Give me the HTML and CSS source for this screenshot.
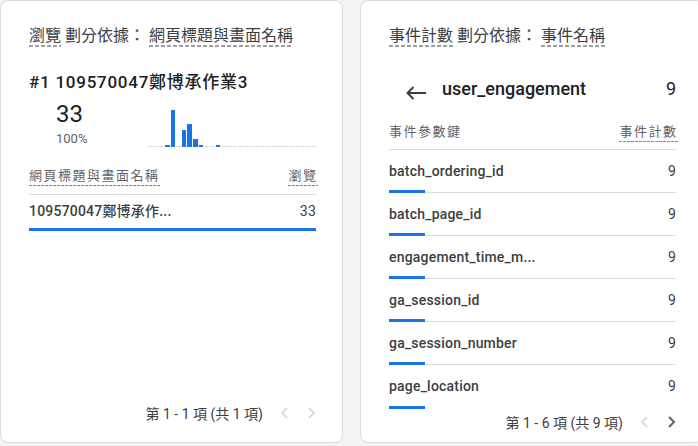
FILE: index.html
```html
<!DOCTYPE html>
<html lang="zh-Hant">
<head>
<meta charset="utf-8">
<link rel="stylesheet" href="styles.css">
</head>
<body>
<div class="page">
  <section class="card">
    <div class="title"><span class="dash">瀏覽</span> 劃分依據： <span class="dash">網頁標題與畫面名稱</span></div>
    <div class="heading">#1 109570047鄭博承作業3</div>
    <div class="metrics">
      <div class="metric">
        <div class="big">33</div>
        <div class="pct">100%</div>
      </div>
      <div class="chart">
        <span class="slot"></span><span class="slot"></span><span class="slot"></span>
        <span class="slot on" style="height:2px"></span>
        <span class="slot on" style="height:37px"></span>
        <span class="slot"></span>
        <span class="slot on" style="height:17px"></span>
        <span class="slot on" style="height:23px"></span>
        <span class="slot on" style="height:8px"></span>
        <span class="slot on" style="height:2px"></span>
        <span class="slot"></span><span class="slot"></span>
        <span class="slot on" style="height:2px"></span>
        <span class="slot"></span><span class="slot"></span><span class="slot"></span><span class="slot"></span><span class="slot"></span>
        <span class="slot"></span><span class="slot"></span><span class="slot"></span><span class="slot"></span><span class="slot"></span>
        <span class="slot"></span><span class="slot"></span><span class="slot"></span><span class="slot"></span><span class="slot"></span>
        <span class="slot"></span><span class="slot"></span>
      </div>
    </div>
    <div class="thead"><span class="dash-sm">網頁標題與畫面名稱</span><span class="dash-sm">瀏覽</span></div>
    <div class="trow">
      <div class="cells"><span>109570047鄭博承作...</span><span class="num">33</span></div>
      <div class="bar" style="width:100%"></div>
    </div>
    <div class="footer">
      <span class="range">第 1 - 1 項 (共 1 項)</span>
      <svg class="chev off" width="8" height="12" viewBox="0 0 8 12"><polyline points="7,1 2,6 7,11"/></svg>
      <svg class="chev off" width="8" height="12" viewBox="0 0 8 12"><polyline points="1,1 6,6 1,11"/></svg>
    </div>
  </section>

  <section class="card">
    <div class="title"><span class="dash">事件計數</span> 劃分依據： <span class="dash">事件名稱</span></div>
    <div class="back">
      <svg class="arrow" width="21" height="14" viewBox="0 0 21 14"><path d="M21 7H2.5M8.5 1L2.5 7l6 6"/></svg>
      <span class="back-name">user_engagement</span>
      <span class="num">9</span>
    </div>
    <div class="thead r"><span class="plain">事件參數鍵</span><span class="dash-sm">事件計數</span></div>
    <div class="prow"><div class="cells"><span>batch_ordering_id</span><span class="num">9</span></div><div class="pbar"></div></div>
    <div class="prow"><div class="cells"><span>batch_page_id</span><span class="num">9</span></div><div class="pbar"></div></div>
    <div class="prow"><div class="cells"><span>engagement_time_m...</span><span class="num">9</span></div><div class="pbar"></div></div>
    <div class="prow"><div class="cells"><span>ga_session_id</span><span class="num">9</span></div><div class="pbar"></div></div>
    <div class="prow"><div class="cells"><span>ga_session_number</span><span class="num">9</span></div><div class="pbar"></div></div>
    <div class="prow last"><div class="cells"><span>page_location</span><span class="num">9</span></div><div class="pbar"></div></div>
    <div class="footer r">
      <span class="range">第 1 - 6 項 (共 9 項)</span>
      <svg class="chev off" width="8" height="12" viewBox="0 0 8 12"><polyline points="7,1 2,6 7,11"/></svg>
      <svg class="chev" width="8" height="12" viewBox="0 0 8 12"><polyline points="1,1 6,6 1,11"/></svg>
    </div>
  </section>
</div>
</body>
</html>
```

FILE: styles.css
```css
html, body {
  margin: 0;
  height: 100%;
}
body {
  background: #f1f3f4;
  font-family: Roboto, "Noto Sans CJK TC", sans-serif;
  overflow: hidden;
}
.page {
  display: flex;
  gap: 17px;
  align-items: flex-start;
}
.card {
  flex: 0 0 343px;
  box-sizing: border-box;
  height: 443px;
  background: #fff;
  border: 1px solid #dadce0;
  border-radius: 8px;
  padding: 25px 26px 0 28px;
  display: flex;
  flex-direction: column;
}
.title {
  font-size: 16px;
  line-height: 20px;
  height: 22px;
  color: #3c4043;
  white-space: nowrap;
}
.dash {
  display: inline-block;
  line-height: 20px;
  padding-bottom: 1px;
  background: linear-gradient(to right, #9aa0a6 0 4px, transparent 4px 6px) repeat-x left bottom / 6px 2px;
}
.heading {
  margin-top: 22px;
  font-size: 17px;
  line-height: 24px;
  font-weight: 500;
  color: #202124;
  letter-spacing: 0.75px;
  white-space: nowrap;
}
.metrics {
  display: flex;
  align-items: flex-end;
  margin-top: 6px;
}
.metric {
  width: 92px;
  padding-left: 27px;
}
.big {
  font-size: 24px;
  line-height: 28px;
  color: #202124;
}
.pct {
  margin-top: 2px;
  font-size: 13px;
  line-height: 17px;
  color: #5f6368;
}
.chart {
  flex: 1;
  height: 40px;
  display: flex;
  align-items: flex-end;
  gap: 1px;
}
.slot {
  flex: 1;
  height: 1px;
  background: #dadce0;
}
.slot.on {
  background: #1a73e8;
}
.thead {
  margin-top: 21px;
  display: flex;
  justify-content: space-between;
  align-items: flex-end;
  padding-bottom: 8px;
  border-bottom: 1px solid #dadce0;
  font-size: 13px;
  color: #5f6368;
}
.thead.r {
  margin-top: 23px;
  padding-bottom: 7px;
}
.dash-sm, .plain {
  display: inline-block;
  line-height: 16px;
  padding-bottom: 2px;
  letter-spacing: 1.5px;
  margin-right: -1.5px;
}
.dash-sm {
  background: linear-gradient(to right, #80868b 0 3px, transparent 3px 4px) repeat-x left bottom / 4px 1px;
}
.cells {
  display: flex;
  justify-content: space-between;
  font-size: 14px;
  line-height: 20px;
  font-weight: 500;
  color: #3c4043;
  letter-spacing: 0.2px;
  white-space: nowrap;
}
.cells .num {
  font-weight: 400;
}
.trow {
  padding-top: 6px;
}
.bar {
  margin-top: 7px;
  height: 3px;
  background: #1a73e8;
}
.back {
  margin-top: 29px;
  display: flex;
  align-items: center;
  padding-left: 16px;
  font-size: 18px;
  line-height: 24px;
  font-weight: 500;
  color: #202124;
}
.arrow {
  margin-top: 8px;
  margin-right: 16px;
  fill: none;
  stroke: #3c4043;
  stroke-width: 2;
}
.back-name {
  flex: 1;
}
.back .num {
  font-weight: 400;
}
.prow {
  box-sizing: border-box;
  height: 43px;
  padding-top: 11px;
  border-bottom: 1px solid #dadce0;
  display: flex;
  flex-direction: column;
}
.prow.last {
  border-bottom: none;
}
.pbar {
  margin-top: auto;
  margin-bottom: -1px;
  width: 36px;
  height: 3px;
  background: #1a73e8;
}
.footer {
  margin-top: auto;
  margin-bottom: 17px;
  height: 24px;
  display: flex;
  justify-content: flex-end;
  align-items: center;
  font-size: 14px;
  color: #3c4043;
}
.footer.r {
  margin-bottom: 8px;
}
.range {
  margin-right: 17px;
  white-space: nowrap;
}
.chev {
  fill: none;
  stroke: #5f6368;
  stroke-width: 2;
}
.chev + .chev {
  margin-left: 20px;
}
.chev.off {
  stroke: #dadce0;
}
```
